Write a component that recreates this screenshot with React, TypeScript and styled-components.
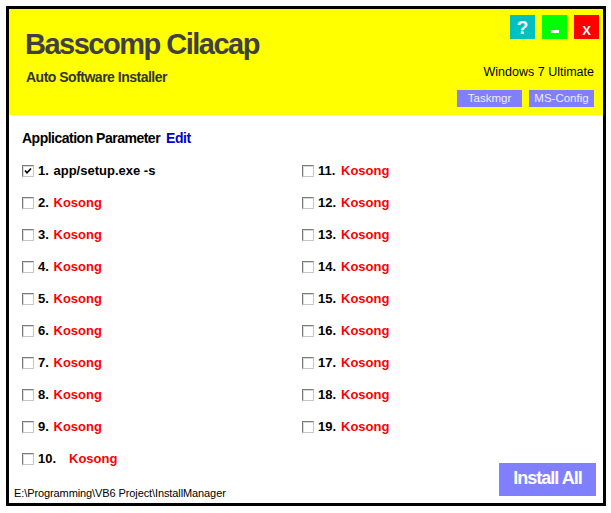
import React from 'react'
import styled, { createGlobalStyle } from 'styled-components'

const GlobalStyle = createGlobalStyle`
  html, body {
    margin: 0;
    padding: 0;
    background: #ffffff;
  }
  body {
    font-family: 'Liberation Sans', Arial, sans-serif;
  }
`

const Window = styled.div`
  margin: 6px 0 0 6px;
  width: 600px;
  height: 500px;
  box-sizing: border-box;
  border: 3px solid #000000;
  display: flex;
  flex-direction: column;
  background: #ffffff;
`

const Header = styled.div`
  height: 106px;
  box-sizing: border-box;
  background: #ffff00;
  display: flex;
  justify-content: space-between;
  padding: 6px 4px 0 17px;
`

const Brand = styled.div`
  display: flex;
  flex-direction: column;
  padding-top: 12.7px;
`

const Title = styled.div`
  font-size: 29px;
  line-height: 32px;
  font-weight: 700;
  letter-spacing: -1.5px;
  color: #404040;
  margin-left: -1px;
`

const Subtitle = styled.div`
  margin-top: 9px;
  font-size: 14px;
  line-height: 16px;
  font-weight: 700;
  letter-spacing: -0.5px;
  color: #333333;
`

const Side = styled.div`
  display: flex;
  flex-direction: column;
  align-items: flex-end;
`

const WindowButtons = styled.div`
  display: flex;
  gap: 7px;
`

const TopButton = styled.div<{ $bg: string; $size: number }>`
  width: 25px;
  height: 24px;
  box-sizing: border-box;
  background: ${(p) => p.$bg};
  color: #ffffff;
  font-size: ${(p) => p.$size}px;
  line-height: 1;
  font-weight: 700;
  display: flex;
  align-items: flex-end;
  justify-content: center;
  padding-bottom: 2.5px;
`

const MinBar = styled.span`
  width: 8px;
  height: 3px;
  background: #ffffff;
  margin-bottom: 3.5px;
`

const OsName = styled.div`
  margin-top: 26px;
  margin-right: 5px;
  font-size: 12.5px;
  line-height: 15px;
  color: #000000;
`

const ToolButtons = styled.div`
  display: flex;
  gap: 7px;
  margin-top: 9.5px;
  margin-right: 5px;
`

const ToolButton = styled.div`
  width: 65px;
  height: 17.5px;
  background: #8080ff;
  color: #eeeeff;
  font-size: 11.5px;
  display: flex;
  align-items: center;
  justify-content: center;
`

const Body = styled.div`
  flex: 1;
  display: flex;
  flex-direction: column;
  padding: 15px 7px 3px 5px;
`

const Heading = styled.div`
  padding-left: 8px;
  font-size: 14px;
  line-height: 16px;
  font-weight: 700;
  letter-spacing: -0.5px;
  color: #000000;
`

const EditLink = styled.span`
  color: #0000cc;
  margin-left: 6px;
`

const Columns = styled.div`
  flex: 1;
  display: flex;
  margin-top: 8.5px;
`

const Column = styled.div<{ $width?: number }>`
  display: flex;
  flex-direction: column;
  ${(p) => (p.$width ? `width: ${p.$width}px;` : 'flex: 1;')}
`

const Row = styled.div`
  height: 32px;
  display: flex;
  align-items: center;
  padding-left: 8px;
  font-size: 13px;
  line-height: 16px;
  font-weight: 700;
`

const Box = styled.span`
  width: 12px;
  height: 12px;
  box-sizing: border-box;
  border-top: 1px solid #7a7a7a;
  border-left: 1px solid #7a7a7a;
  border-bottom: 1px solid #c8c8c8;
  border-right: 1px solid #c8c8c8;
  box-shadow: inset 1px 1px 0 #dadada;
  background: #ffffff;
  margin-right: 4px;
  display: flex;
  align-items: center;
  justify-content: center;
`

const Num = styled.span<{ $w: number }>`
  display: inline-block;
  width: ${(p) => p.$w}px;
  color: #000000;
`

const Command = styled.span<{ $empty: boolean }>`
  color: ${(p) => (p.$empty ? '#ff0000' : '#000000')};
`

const PathText = styled.div`
  margin-top: auto;
  font-size: 11px;
  line-height: 13px;
  letter-spacing: -0.1px;
  color: #000000;
`

const InstallButton = styled.div`
  margin-top: auto;
  margin-bottom: 4px;
  align-self: flex-end;
  width: 97px;
  height: 33px;
  box-sizing: border-box;
  background: #8080ff;
  color: #ffffff;
  font-size: 18px;
  line-height: 1;
  font-weight: 700;
  letter-spacing: -1px;
  display: flex;
  align-items: center;
  justify-content: center;
  padding-bottom: 3px;
`

type Slot = { n: number; cmd: string | null; checked?: boolean; numWidth: number }

const left: Slot[] = [
  { n: 1, cmd: 'app/setup.exe -s', checked: true, numWidth: 15.5 },
  ...[2, 3, 4, 5, 6, 7, 8, 9].map((n) => ({ n, cmd: null, numWidth: 15.5 })),
  { n: 10, cmd: null, numWidth: 31 },
]

const right: Slot[] = [11, 12, 13, 14, 15, 16, 17, 18, 19].map((n) => ({ n, cmd: null, numWidth: 23 }))

const SlotRow = ({ slot }: { slot: Slot }) => (
  <Row>
    <Box>
      {slot.checked && (
        <svg width="8" height="8" viewBox="0 0 8 8">
          <polyline points="1,3.5 3,5.8 7,1.5" fill="none" stroke="#000" strokeWidth="1.6" />
        </svg>
      )}
    </Box>
    <Num $w={slot.numWidth}>{slot.n}.</Num>
    <Command $empty={!slot.cmd}>{slot.cmd ?? 'Kosong'}</Command>
  </Row>
)

const App: React.FC = () => {
  return (
    <>
      <GlobalStyle />
      <Window>
        <Header>
          <Brand>
            <Title>Basscomp Cilacap</Title>
            <Subtitle>Auto Software Installer</Subtitle>
          </Brand>
          <Side>
            <WindowButtons>
              <TopButton $bg="#00c0c0" $size={19}>?</TopButton>
              <TopButton $bg="#00ff00" $size={13}>
                <MinBar />
              </TopButton>
              <TopButton $bg="#ff0000" $size={13}>X</TopButton>
            </WindowButtons>
            <OsName>Windows 7 Ultimate</OsName>
            <ToolButtons>
              <ToolButton>Taskmgr</ToolButton>
              <ToolButton>MS-Config</ToolButton>
            </ToolButtons>
          </Side>
        </Header>
        <Body>
          <Heading>
            Application Parameter<EditLink>Edit</EditLink>
          </Heading>
          <Columns>
            <Column $width={280}>
              {left.map((s) => (
                <SlotRow key={s.n} slot={s} />
              ))}
              <PathText>E:\Programming\VB6 Project\InstallManager</PathText>
            </Column>
            <Column>
              {right.map((s) => (
                <SlotRow key={s.n} slot={s} />
              ))}
              <InstallButton>Install All</InstallButton>
            </Column>
          </Columns>
        </Body>
      </Window>
    </>
  )
}

export default App
